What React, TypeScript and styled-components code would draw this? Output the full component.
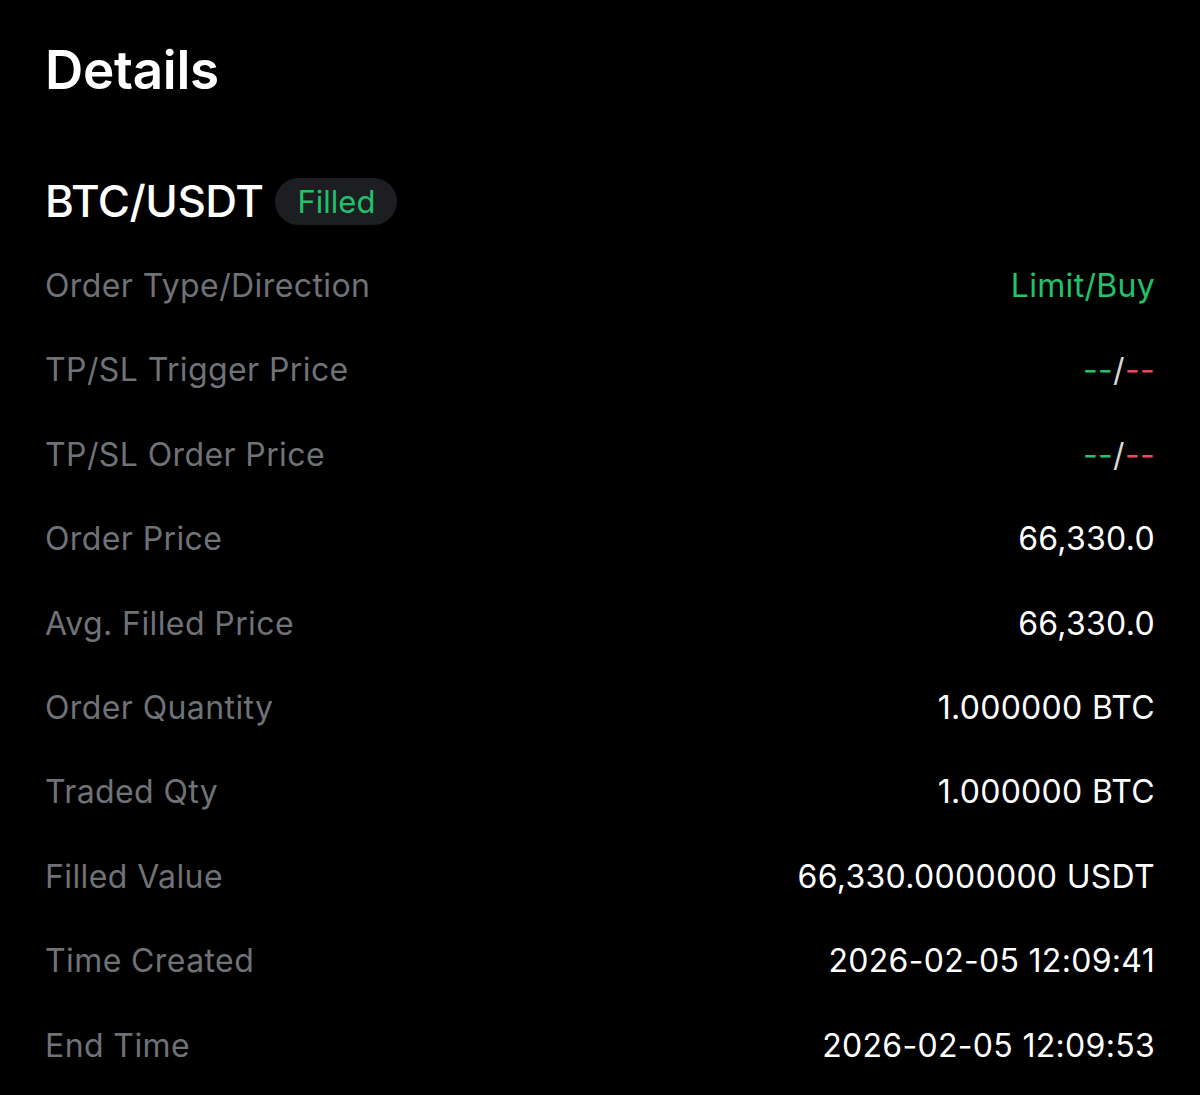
import React from "react";
import styled, { createGlobalStyle } from "styled-components";

const GlobalStyle = createGlobalStyle`
  html, body {
    margin: 0;
    padding: 0;
    background: #000;
  }
  body {
    font-family: Inter, "Noto Sans", sans-serif;
    -webkit-font-smoothing: antialiased;
  }
`;

const Page = styled.div`
  background: #000;
  min-height: 1095px;
  padding: 0 45px;
  box-sizing: border-box;
`;

const Title = styled.h1`
  margin: 0;
  height: 159px;
  padding-top: 36px;
  box-sizing: border-box;
  font-size: 53px;
  line-height: 68px;
  font-weight: 600;
  color: #fff;
  letter-spacing: -0.3px;
`;

const Row = styled.div`
  height: 84.4px;
  display: flex;
  align-items: center;
  justify-content: space-between;
`;

const Pair = styled.div`
  display: flex;
  align-items: center;
  gap: 12px;
`;

const PairName = styled.span`
  font-size: 44px;
  font-weight: 500;
  color: #fff;
  letter-spacing: -0.5px;
`;

const Badge = styled.span`
  height: 47px;
  padding: 0 22px;
  display: inline-flex;
  align-items: center;
  border-radius: 24px;
  background: #1c1e22;
  color: #20c26b;
  font-size: 31px;
`;

const Label = styled.span`
  font-size: 32px;
  color: #6f7277;
  letter-spacing: 0.4px;
`;

const Value = styled.span<{ $tone?: "green" }>`
  font-size: 32px;
  color: ${(p) => (p.$tone === "green" ? "#20c26b" : "#fff")};
  letter-spacing: 0.3px;
`;

const Dash = styled.span<{ $tone: "green" | "red" | "white" }>`
  color: ${(p) =>
    p.$tone === "green" ? "#20c26b" : p.$tone === "red" ? "#f0475a" : "#d8d8d8"};
`;

const rows: { label: string; value: React.ReactNode; tone?: "green" }[] = [
  { label: "Order Type/Direction", value: "Limit/Buy", tone: "green" },
  {
    label: "TP/SL Trigger Price",
    value: (
      <>
        <Dash $tone="green">--</Dash>
        <Dash $tone="white">/</Dash>
        <Dash $tone="red">--</Dash>
      </>
    ),
  },
  {
    label: "TP/SL Order Price",
    value: (
      <>
        <Dash $tone="green">--</Dash>
        <Dash $tone="white">/</Dash>
        <Dash $tone="red">--</Dash>
      </>
    ),
  },
  { label: "Order Price", value: "66,330.0" },
  { label: "Avg. Filled Price", value: "66,330.0" },
  { label: "Order Quantity", value: "1.000000 BTC" },
  { label: "Traded Qty", value: "1.000000 BTC" },
  { label: "Filled Value", value: "66,330.0000000 USDT" },
  { label: "Time Created", value: "2026-02-05 12:09:41" },
  { label: "End Time", value: "2026-02-05 12:09:53" },
];

export default function App() {
  return (
    <>
      <GlobalStyle />
      <Page>
        <Title>Details</Title>
        <Row>
          <Pair>
            <PairName>BTC/USDT</PairName>
            <Badge>Filled</Badge>
          </Pair>
        </Row>
        {rows.map((r) => (
          <Row key={r.label}>
            <Label>{r.label}</Label>
            <Value $tone={r.tone}>{r.value}</Value>
          </Row>
        ))}
      </Page>
    </>
  );
}
